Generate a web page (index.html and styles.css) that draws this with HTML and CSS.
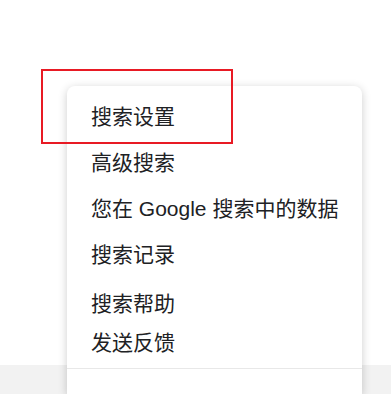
FILE: index.html
```html
<!DOCTYPE html>
<html lang="zh-CN">
<head>
  <meta charset="UTF-8" />
  <meta name="viewport" content="width=device-width, initial-scale=1.0"/>
  <title>搜索设置</title>
  <link rel="stylesheet" href="styles.css">
</head>
<body>
  <div class="page">
    <div class="top"></div>
    <div class="footer"></div>
  </div>

  <div class="menu">
    <div class="menu-group">
      <a class="menu-item" href="#">搜索设置</a>
      <a class="menu-item" href="#">高级搜索</a>
      <a class="menu-item" href="#">您在 Google 搜索中的数据</a>
      <a class="menu-item" href="#">搜索记录</a>
    </div>
    <div class="menu-group small">
      <a class="menu-item" href="#">搜索帮助</a>
      <a class="menu-item" href="#">发送反馈</a>
    </div>
    <div class="divider"></div>
  </div>

  <div class="highlight"></div>
</body>
</html>
```

FILE: styles.css
```css
body {
  margin: 0;
  font-family: "Liberation Sans", "Noto Sans CJK SC", sans-serif;
  background-color: #fff;
  overflow: hidden;
}
.page {
  height: 394px;
  display: flex;
  flex-direction: column;
}
.top {
  height: 365px;
  background-color: #fff;
}
.footer {
  flex: 1;
  background-color: #f2f2f2;
}
.menu {
  position: absolute;
  left: 67px;
  top: 86px;
  width: 295px;
  height: 308px;
  background-color: #fff;
  border-radius: 8px 8px 0 0;
  box-shadow: 0 2px 10px rgba(0,0,0,0.2);
  padding-top: 8px;
  box-sizing: border-box;
}
.menu-item {
  display: block;
  height: 46px;
  line-height: 46px;
  padding-left: 24px;
  font-size: 21px;
  color: #202124;
  text-decoration: none;
  white-space: nowrap;
}
.menu-group.small {
  padding-top: 6px;
}
.menu-group.small .menu-item {
  height: 39px;
  line-height: 39px;
}
.divider {
  margin-top: 6px;
  border-top: 1px solid #e8e8e8;
}
.highlight {
  position: absolute;
  left: 41px;
  top: 69px;
  width: 192px;
  height: 75px;
  border: 2px solid #e81a24;
  box-sizing: border-box;
}
```
